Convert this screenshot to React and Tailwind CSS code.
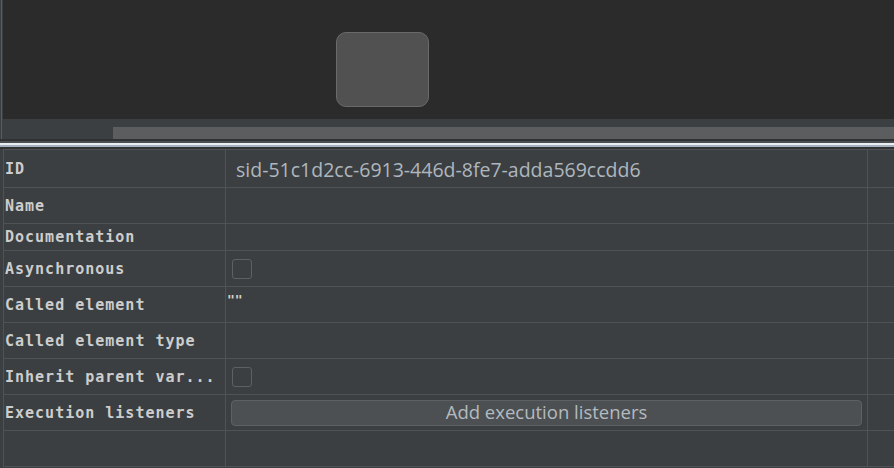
const labelFont = "font-['DejaVu_Sans_Mono',monospace] font-bold text-[15px] tracking-[1px] text-[#cdcdcd]";
const valueFont = "font-['Open_Sans',sans-serif] text-[19.5px] text-[#aeb6be] pt-[2px]";

const Row = ({ label, h, children, pad = "pl-[1px]" }) => (
    <div className={`grid grid-cols-[222px_642px_1fr] border-b border-[#505355] ${h}`}>
        <div className={`flex items-center pl-[1px] pt-[1px] border-r border-[#505355] ${labelFont} whitespace-nowrap overflow-hidden`}>
            {label}
        </div>
        <div className={`flex items-center ${pad} border-r border-[#505355]`}>{children}</div>
        <div></div>
    </div>
)

const Checkbox = () => (
    <div className="w-[20px] h-[20px] rounded-[3px] border border-[#5e6163] bg-[#3c3f41]"></div>
)

const App = () => {
    return (
        <div className="w-[894px] h-[468px] bg-[#3c3f41] overflow-hidden flex flex-col">
            <div className="h-[139px] flex shrink-0">
                <div className="w-[1px]"></div>
                <div className="w-[1px] bg-[#5a5d5f]"></div>
                <div className="w-[1px]"></div>
                <div className="flex-1 flex flex-col">
                    <div className="h-[119px] bg-[#2b2b2b] relative">
                        <div className="absolute left-[333px] top-[32px] w-[93px] h-[75px] rounded-[10px] bg-[#515151] border border-[#6a6a6a]"></div>
                    </div>
                    <div className="h-[20px] pt-[8px] pl-[110px]">
                        <div className="h-[12px] bg-[#5c5d5f]"></div>
                    </div>
                </div>
            </div>
            <div className="h-[2px] bg-[#2f3133] shrink-0"></div>
            <div className="h-[2px] bg-[#4b4f52] shrink-0"></div>
            <div className="h-[2px] bg-[#e9eef2] shrink-0"></div>
            <div className="h-[2px] bg-[#a5b1bc] shrink-0"></div>
            <div className="h-[2px] bg-[#2f3133] shrink-0"></div>
            <div className="ml-[3px] border-l border-t border-[#505355] flex flex-col">
                <Row label="ID" h="h-[38px]" pad="pl-[10px]">
                    <span className={valueFont}>sid-51c1d2cc-6913-446d-8fe7-adda569ccdd6</span>
                </Row>
                <Row label="Name" h="h-[36px]" />
                <Row label="Documentation" h="h-[27px]" />
                <Row label="Asynchronous" h="h-[36px]" pad="pl-[6px]">
                    <Checkbox />
                </Row>
                <Row label="Called element" h="h-[36px]" pad="pl-[1px]">
                    <span className="font-['DejaVu_Sans_Mono',monospace] font-bold text-[13px] text-[#d6d2c4] -mt-[9px]">""</span>
                </Row>
                <Row label="Called element type" h="h-[36px]" />
                <Row label="Inherit parent var..." h="h-[36px]" pad="pl-[6px]">
                    <Checkbox />
                </Row>
                <Row label="Execution listeners" h="h-[36px]" pad="px-[5px]">
                    <button className="w-full h-[26px] rounded-[4px] border border-[#5e6163] bg-[#4c5052] font-['Open_Sans',sans-serif] text-[18.5px] text-[#b4babf] leading-none">
                        Add execution listeners
                    </button>
                </Row>
                <Row label="" h="h-[36px]" />
            </div>
        </div>
    )
}

export default App
